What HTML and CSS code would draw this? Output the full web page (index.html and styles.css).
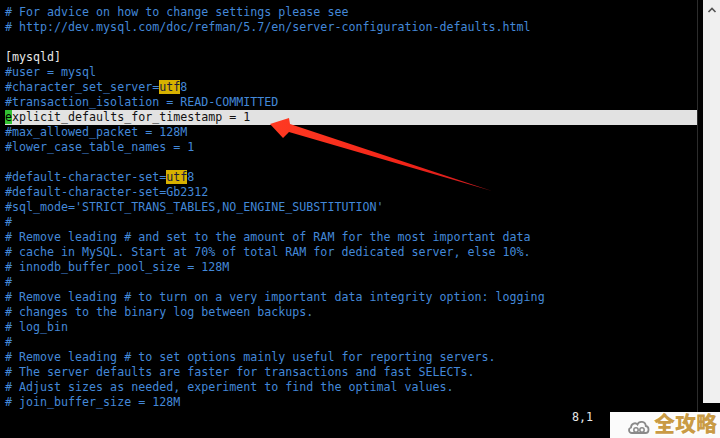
FILE: index.html
```html
<!DOCTYPE html>
<html>
<head>
<meta charset="utf-8">
<link rel="stylesheet" href="styles.css">
</head>
<body>
<div class="window">
  <div class="screen">
    <div class="line c"># For advice on how to change settings please see</div>
    <div class="line c"># http://dev.mysql.com/doc/refman/5.7/en/server-configuration-defaults.html</div>
    <div class="line"></div>
    <div class="line t">[mysqld]</div>
    <div class="line c">#user = mysql</div>
    <div class="line c">#character_set_server=<span class="search">utf</span>8</div>
    <div class="line c">#transaction_isolation = READ-COMMITTED</div>
    <div class="line cur"><span class="cursor">e</span>xplicit_defaults_for_timestamp = 1</div>
    <div class="line c">#max_allowed_packet = 128M</div>
    <div class="line c">#lower_case_table_names = 1</div>
    <div class="line"></div>
    <div class="line c">#default-character-set=<span class="search">utf</span>8</div>
    <div class="line c">#default-character-set=Gb2312</div>
    <div class="line c">#sql_mode='STRICT_TRANS_TABLES,NO_ENGINE_SUBSTITUTION'</div>
    <div class="line c">#</div>
    <div class="line c"># Remove leading # and set to the amount of RAM for the most important data</div>
    <div class="line c"># cache in MySQL. Start at 70% of total RAM for dedicated server, else 10%.</div>
    <div class="line c"># innodb_buffer_pool_size = 128M</div>
    <div class="line c">#</div>
    <div class="line c"># Remove leading # to turn on a very important data integrity option: logging</div>
    <div class="line c"># changes to the binary log between backups.</div>
    <div class="line c"># log_bin</div>
    <div class="line c">#</div>
    <div class="line c"># Remove leading # to set options mainly useful for reporting servers.</div>
    <div class="line c"># The server defaults are faster for transactions and fast SELECTs.</div>
    <div class="line c"># Adjust sizes as needed, experiment to find the optimal values.</div>
    <div class="line c"># join_buffer_size = 128M</div>
    <div class="line status"><span class="ruler">8,1</span></div>
  </div>
  <div class="gutter"></div>
  <div class="scrollbar">
    <svg class="up" width="10" height="8" viewBox="0 0 10 8"><path d="M1.5 6 L5 2.5 L8.5 6" fill="none" stroke="#555" stroke-width="1.6"/></svg>
  </div>
</div>

<svg class="arrow" width="720" height="438" viewBox="0 0 720 438">
  <defs>
    <linearGradient id="ag" x1="270" y1="124" x2="492" y2="192" gradientUnits="userSpaceOnUse">
      <stop offset="0" stop-color="#ff3a22"/>
      <stop offset="0.6" stop-color="#f22418"/>
      <stop offset="1" stop-color="#c81a20"/>
    </linearGradient>
  </defs>
  <polygon fill="url(#ag)" points="270,124 289,118 290,124 492,191 289,132 283,138"/>
</svg>

<div class="watermark">
  <svg class="cloud" width="24" height="18" viewBox="0 0 24 18">
    <path d="M5 15 C1.5 15 1 10.5 4 9.5 C4 5.5 8.5 4 10.5 6.5 C12 2.5 18.5 3 18.8 8 C22.5 8.5 22.5 15 18.5 15 Z" fill="none" stroke="#8a8a8a" stroke-width="1.8"/>
    <circle cx="9" cy="12" r="2.2" fill="none" stroke="#8a8a8a" stroke-width="1.5"/>
    <circle cx="15" cy="12" r="2.2" fill="none" stroke="#8a8a8a" stroke-width="1.5"/>
  </svg>
  <span class="wm-text">全攻略</span>
</div>
</body>
</html>
```

FILE: styles.css
```css
html, body {
  margin: 0;
  padding: 0;
  background: #000;
  width: 720px;
  height: 438px;
  overflow: hidden;
}

.window {
  display: flex;
  width: 720px;
  height: 438px;
}

.screen {
  width: 692px;
  padding: 5px 0 0 5px;
  border-right: 1px solid #2c2c2c;
  font-family: "DejaVu Sans Mono", "Liberation Mono", monospace;
  font-size: 11.65px;
  color: #e6e6e6;
}

.line {
  height: 15px;
  line-height: 15px;
  white-space: pre;
}

.c {
  color: #4388d8;
}

.t {
  color: #e8e8e8;
}

.search {
  background: #d7b100;
  color: #1b1b3a;
}

.cur {
  background: #e2e2e2;
  color: #111;
}

.cursor {
  background: #33c233;
  color: #000;
}

.status {
  color: #e8e8e8;
}

.ruler {
  margin-left: 567px;
}

.gutter {
  width: 5px;
  background: #000;
}

.scrollbar {
  flex: 1;
  height: 403px;
  background: #f0f0f0;
  display: flex;
  justify-content: center;
  padding-top: 6px;
  box-sizing: border-box;
}

.up {
  display: block;
}

.arrow {
  position: absolute;
  left: 0;
  top: 0;
  pointer-events: none;
}

.watermark {
  position: absolute;
  left: 610px;
  top: 412px;
  width: 110px;
  height: 26px;
  background: #fbfbfb;
  display: flex;
  align-items: center;
  gap: 3px;
  padding-left: 17px;
  box-sizing: border-box;
}

.cloud {
  display: block;
  margin-top: 4px;
}

.wm-text {
  font-family: "Noto Sans CJK SC", sans-serif;
  font-weight: 900;
  font-size: 21px;
  line-height: 21px;
  color: #c99b45;
  margin-top: -6px;
  text-shadow: 0 0 1px #fff, 1px 1px 0 #fff, -1px -1px 0 #fff;
}
```
